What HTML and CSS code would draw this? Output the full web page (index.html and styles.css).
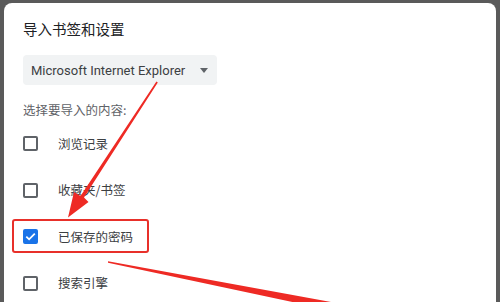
FILE: index.html
```html
<!DOCTYPE html>
<html lang="zh-CN">
<head>
<meta charset="utf-8">
<link rel="stylesheet" href="styles.css">
</head>
<body>
<div class="backdrop">
  <div class="dialog">
    <div class="title">导入书签和设置</div>
    <div class="select">
      <span class="select-text">Microsoft Internet Explorer</span>
      <span class="caret"></span>
    </div>
    <div class="subtitle">选择要导入的内容:</div>
    <div class="rows">
      <div class="row"><span class="box"></span><span class="label">浏览记录</span></div>
      <div class="row"><span class="box"></span><span class="label">收藏夹/书签</span></div>
      <div class="row"><span class="box checked"><svg viewBox="0 0 15 15" width="15" height="15"><path d="M3.3 7.6 L6.1 10.3 L11.8 4.6" fill="none" stroke="#fff" stroke-width="1.8"/></svg></span><span class="label">已保存的密码</span></div>
      <div class="row"><span class="box"></span><span class="label">搜索引擎</span></div>
    </div>
    <div class="highlight"></div>
  </div>
  <svg class="arrows" viewBox="0 0 500 302" width="500" height="302">
    <polygon fill="#ee2a24" points="157.8,82.4 156.4,81.6 80.5,196 74,192 68,217.5 88.5,202 84,197.5"/>
    <polygon fill="#ee2a24" points="108,261.2 108,262.8 330,310 331,302"/>
  </svg>
</div>
</body>
</html>
```

FILE: styles.css
```css
html, body {
  margin: 0;
  padding: 0;
  width: 500px;
  height: 302px;
  overflow: hidden;
  background: #5a5a5a;
}
.backdrop {
  position: relative;
  width: 500px;
  height: 302px;
  overflow: hidden;
  padding-top: 3px;
  box-sizing: border-box;
}
.dialog {
  position: relative;
  margin-left: 4px;
  width: 492px;
  height: 330px;
  background: #fff;
  border-radius: 8px 8px 0 0;
  box-sizing: border-box;
  padding: 16px 0 0 19px;
  font-family: "Noto Sans CJK SC", "Noto Sans", sans-serif;
  color: #202124;
}
.title {
  font-size: 14.5px;
  line-height: 20px;
  height: 20px;
}
.select {
  margin-top: 16px;
  width: 194px;
  height: 30px;
  background: #f1f3f4;
  border-radius: 4px;
  display: flex;
  align-items: center;
  padding: 0 0 0 8px;
  box-sizing: border-box;
}
.select-text {
  font-family: Roboto, "Liberation Sans", sans-serif;
  font-size: 13px;
  color: #3c4043;
  flex: 1;
}
.caret {
  width: 0;
  height: 0;
  border-left: 4.5px solid transparent;
  border-right: 4.5px solid transparent;
  border-top: 5px solid #5f6368;
  margin-right: 9px;
}
.subtitle {
  margin-top: 15px;
  font-size: 12.5px;
  line-height: 20px;
  height: 20px;
  color: #5f6368;
}
.rows {
  display: flex;
  flex-direction: column;
  margin-top: 0.25px;
}
.row {
  height: 46.5px;
  display: flex;
  align-items: center;
  gap: 20px;
}
.box {
  width: 15px;
  height: 15px;
  box-sizing: border-box;
  border: 2px solid #5f6368;
  border-radius: 2px;
  display: flex;
  align-items: center;
  justify-content: center;
}
.box.checked {
  background: #1a73e8;
  border-color: #1a73e8;
}
.box.checked svg {
  flex: none;
}
.label {
  font-size: 12.5px;
  line-height: 18px;
  color: #3c4043;
}
.highlight {
  position: absolute;
  left: 8px;
  top: 216px;
  width: 137px;
  height: 34px;
  box-sizing: border-box;
  border: 2.5px solid #e8302a;
  border-radius: 3px;
}
.arrows {
  position: absolute;
  left: 0;
  top: 0;
  pointer-events: none;
}
```
